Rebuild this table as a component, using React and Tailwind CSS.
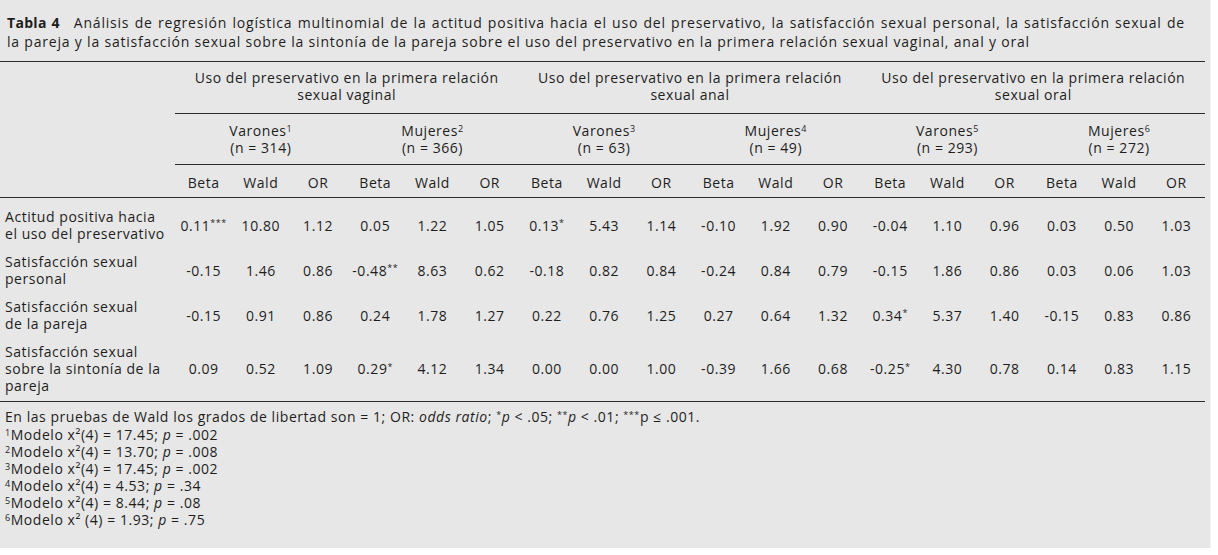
import React from "react";

const groups = [
  { line1: "Uso del preservativo en la primera relación", line2: "sexual vaginal" },
  { line1: "Uso del preservativo en la primera relación", line2: "sexual anal" },
  { line1: "Uso del preservativo en la primera relación", line2: "sexual oral" },
];

const subs = [
  { name: "Varones", sup: "1", n: "314" },
  { name: "Mujeres", sup: "2", n: "366" },
  { name: "Varones", sup: "3", n: "63" },
  { name: "Mujeres", sup: "4", n: "49" },
  { name: "Varones", sup: "5", n: "293" },
  { name: "Mujeres", sup: "6", n: "272" },
];

// each value: [number, stars]
const rows = [
  {
    label: ["Actitud positiva hacia", "el uso del preservativo"],
    values: [
      ["0.11", "***"], ["10.80"], ["1.12"], ["0.05"], ["1.22"], ["1.05"],
      ["0.13", "*"], ["5.43"], ["1.14"], ["-0.10"], ["1.92"], ["0.90"],
      ["-0.04"], ["1.10"], ["0.96"], ["0.03"], ["0.50"], ["1.03"],
    ],
  },
  {
    label: ["Satisfacción sexual", "personal"],
    values: [
      ["-0.15"], ["1.46"], ["0.86"], ["-0.48", "**"], ["8.63"], ["0.62"],
      ["-0.18"], ["0.82"], ["0.84"], ["-0.24"], ["0.84"], ["0.79"],
      ["-0.15"], ["1.86"], ["0.86"], ["0.03"], ["0.06"], ["1.03"],
    ],
  },
  {
    label: ["Satisfacción sexual", "de la pareja"],
    values: [
      ["-0.15"], ["0.91"], ["0.86"], ["0.24"], ["1.78"], ["1.27"],
      ["0.22"], ["0.76"], ["1.25"], ["0.27"], ["0.64"], ["1.32"],
      ["0.34", "*"], ["5.37"], ["1.40"], ["-0.15"], ["0.83"], ["0.86"],
    ],
  },
  {
    label: ["Satisfacción sexual", "sobre la sintonía de la", "pareja"],
    values: [
      ["0.09"], ["0.52"], ["1.09"], ["0.29", "*"], ["4.12"], ["1.34"],
      ["0.00"], ["0.00"], ["1.00"], ["-0.39"], ["1.66"], ["0.68"],
      ["-0.25", "*"], ["4.30"], ["0.78"], ["0.14"], ["0.83"], ["1.15"],
    ],
  },
];

const models = [
  { sup: "1", chi: "x²(4)", val: "17.45", p: ".002" },
  { sup: "2", chi: "x²(4)", val: "13.70", p: ".008" },
  { sup: "3", chi: "x²(4)", val: "17.45", p: ".002" },
  { sup: "4", chi: "x²(4)", val: "4.53", p: ".34" },
  { sup: "5", chi: "x²(4)", val: "8.44", p: ".08" },
  { sup: "6", chi: "x² (4)", val: "1.93", p: ".75" },
];

const rule = "border-[#2c2c2c]";

export default function App() {
  return (
    <div className="min-h-screen bg-white">
      <div className="w-[1211px] h-[548px] bg-[#e7e7e7] border-r border-[#f3f3f3] font-['Open_Sans','Noto_Sans',sans-serif] text-[14px] tracking-[0.55px] text-[#1e1e1e]">
        {/* titulo */}
        <div className="pl-[7px] pt-[13px] leading-[19px] tracking-[0.8px] whitespace-nowrap">
          <p className="w-[1178px] text-justify [text-align-last:justify]">
            <span className="font-bold tracking-[0.3px]">Tabla 4</span>
            <span className="ml-[14px]">
              Análisis de regresión logística multinomial de la actitud positiva hacia el uso del preservativo, la satisfacción sexual personal, la satisfacción sexual de
            </span>
          </p>
          <p>
            la pareja y la satisfacción sexual sobre la sintonía de la pareja sobre el uso del preservativo en la primera relación sexual vaginal, anal y oral
          </p>
        </div>

        <table className={`mt-[10px] w-[1205px] table-fixed border-collapse leading-[17px] border-t ${rule}`}>
          <colgroup>
            <col className="w-[175px]" />
            {Array.from({ length: 18 }).map((_, i) => (
              <col key={i} />
            ))}
          </colgroup>
          <thead>
            <tr>
              <th rowSpan={2} />
              {groups.map((g, i) => (
                <th
                  key={i}
                  colSpan={6}
                  className={`font-normal text-center pt-[7px] pb-[10px] border-b ${rule}`}
                >
                  {g.line1}
                  <br />
                  {g.line2}
                </th>
              ))}
            </tr>
            <tr>
              {subs.map((s, i) => (
                <th
                  key={i}
                  colSpan={3}
                  className={`font-normal text-center pt-[8px] pb-[8px] border-b ${rule}`}
                >
                  {s.name}
                  <sup className="text-[9px]">{s.sup}</sup>
                  <br />
                  (n = {s.n})
                </th>
              ))}
            </tr>
            <tr className={`border-b ${rule}`}>
              <th />
              {subs.map((s, i) => (
                <React.Fragment key={i}>
                  <th className="font-normal text-center pt-[9px] pb-[6px]">Beta</th>
                  <th className="font-normal text-center pt-[9px] pb-[6px]">Wald</th>
                  <th className="font-normal text-center pt-[9px] pb-[6px]">OR</th>
                </React.Fragment>
              ))}
            </tr>
          </thead>
          <tbody>
            {rows.map((r, ri) => {
              const last = ri === rows.length - 1;
              const pad = last ? "pt-[10px] pb-[7px]" : "pt-[10px] pb-[1px]";
              return (
                <tr key={ri} className={last ? `border-b ${rule}` : ""}>
                  <td className={`pl-[5px] text-left align-middle whitespace-nowrap ${pad}`}>
                    {r.label.map((l, li) => (
                      <React.Fragment key={li}>
                        {li > 0 && <br />}
                        {l}
                      </React.Fragment>
                    ))}
                  </td>
                  {r.values.map((v, vi) => (
                    <td key={vi} className={`text-center align-middle whitespace-nowrap ${pad}`}>
                      {v[0]}
                      {v[1] && <sup className="text-[9px]">{v[1]}</sup>}
                    </td>
                  ))}
                </tr>
              );
            })}
          </tbody>
        </table>

        {/* notas */}
        <div className="pl-[5px] pt-[6px] leading-[17px]">
          <p className="mb-px">
            En las pruebas de Wald los grados de libertad son = 1; OR: <i>odds ratio</i>;{" "}
            <sup className="text-[9px]">*</sup>
            <i>p</i> &lt; .05; <sup className="text-[9px]">**</sup>
            <i>p</i> &lt; .01; <sup className="text-[9px]">***</sup>p ≤ .001.
          </p>
          {models.map((m) => (
            <p key={m.sup}>
              <sup className="text-[9px]">{m.sup}</sup>Modelo {m.chi} = {m.val}; <i>p</i> = {m.p}
            </p>
          ))}
        </div>
      </div>
    </div>
  );
}
